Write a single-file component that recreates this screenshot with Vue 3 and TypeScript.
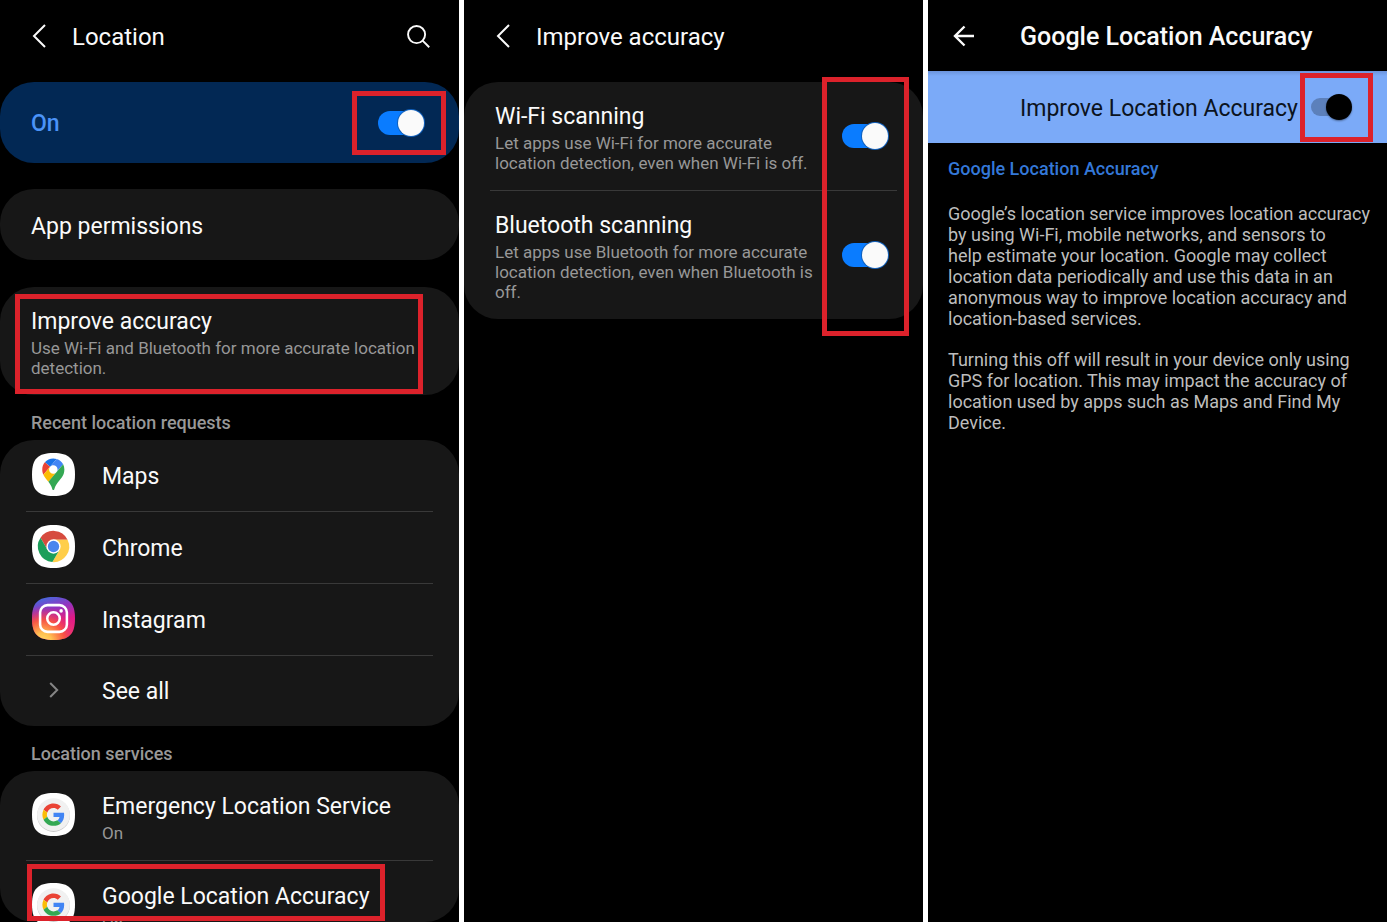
<script setup lang="ts">
import { ref } from 'vue'

interface RecentApp {
  id: 'maps' | 'chrome' | 'instagram'
  name: string
}

interface Scan {
  id: string
  name: string
  detail: string
  on: boolean
}

interface Service {
  name: string
  state: string
}

const locationOn = ref(true)
const accuracyOn = ref(true)

const recentApps: RecentApp[] = [
  { id: 'maps', name: 'Maps' },
  { id: 'chrome', name: 'Chrome' },
  { id: 'instagram', name: 'Instagram' },
]

const services: Service[] = [
  { name: 'Emergency Location Service', state: 'On' },
  { name: 'Google Location Accuracy', state: 'On' },
]

const scans = ref<Scan[]>([
  {
    id: 'wifi',
    name: 'Wi-Fi scanning',
    detail: 'Let apps use Wi-Fi for more accurate location detection, even when Wi-Fi is off.',
    on: true,
  },
  {
    id: 'bluetooth',
    name: 'Bluetooth scanning',
    detail: 'Let apps use Bluetooth for more accurate location detection, even when Bluetooth is off.',
    on: true,
  },
])

const about: string[] = [
  [
    'Google’s location service improves location accuracy',
    'by using Wi-Fi, mobile networks, and sensors to',
    'help estimate your location. Google may collect',
    'location data periodically and use this data in an',
    'anonymous way to improve location accuracy and',
    'location-based services.',
  ].join('\n'),
  [
    'Turning this off will result in your device only using',
    'GPS for location. This may impact the accuracy of',
    'location used by apps such as Maps and Find My',
    'Device.',
  ].join('\n'),
]

const squircle = 'M22 0C38 0 44 6 44 22S38 44 22 44 0 38 0 22 6 0 22 0Z'
</script>

<template>
  <main class="screens">
    <section class="screen">
      <header class="bar">
        <button class="icon-button" type="button" aria-label="Back">
          <svg class="chevron" viewBox="0 0 14 24"><path d="M13 1 2 12l11 11" /></svg>
        </button>
        <h1 class="title">Location</h1>
        <button class="icon-button search" type="button" aria-label="Search">
          <svg class="lens" viewBox="0 0 24 24"><circle cx="10" cy="10" r="8.9" /><path d="m16.3 16.3 6.9 6.9" /></svg>
        </button>
      </header>

      <div class="card master">
        <label class="master-label" for="location-on">On</label>
        <input id="location-on" v-model="locationOn" class="switch" type="checkbox" role="switch" />
        <span class="mark mark-master"></span>
      </div>

      <button class="card permissions" type="button">App permissions</button>

      <button class="card improve" type="button">
        <span class="name">Improve accuracy</span>
        <span class="detail">Use Wi-Fi and Bluetooth for more accurate location detection.</span>
        <span class="mark mark-improve"></span>
      </button>

      <h2 class="group">Recent location requests</h2>
      <ul class="card list">
        <li v-for="app in recentApps" :key="app.id" class="row">
          <button class="app" type="button">
            <svg v-if="app.id === 'maps'" class="app-icon" viewBox="0 0 44 44">
              <path fill="#fff" :d="squircle" />
              <g transform="translate(10.5 5.5) scale(0.245)">
                <path fill="#1a73e8" d="M60.2 2.2C55.8.8 51 0 46.1 0 32 0 19.3 6.4 10.8 16.5l21.8 18.3L60.2 2.2z" />
                <path fill="#ea4335" d="M10.8 16.5C4.1 24.5 0 34.9 0 46.1c0 8.7 1.7 15.7 4.6 22l28-33.3-21.8-18.3z" />
                <path fill="#4285f4" d="M46.2 28.5c9.8 0 17.7 7.9 17.7 17.7 0 4.3-1.6 8.3-4.2 11.4 0 0 13.9-16.6 27.5-32.7-5.6-10.8-15.3-19-27-22.7L32.6 34.8c3.3-3.8 8.1-6.3 13.6-6.3" />
                <path fill="#fbbc04" d="M46.2 63.8c-9.8 0-17.7-7.9-17.7-17.7 0-4.3 1.5-8.3 4.1-11.3l-28 33.3c4.8 10.6 12.8 19.2 21 29.9l34.1-40.5c-3.3 3.9-8.1 6.3-13.5 6.3" />
                <path fill="#34a853" d="M59.1 109.2c15.4-24.1 33.3-35 33.3-63 0-7.7-1.9-14.9-5.2-21.3L25.6 98c2.6 3.4 5.3 7.3 7.9 11.3 9.4 14.5 6.8 23.1 12.8 23.1s3.4-8.7 12.8-23.2" />
              </g>
            </svg>
            <svg v-else-if="app.id === 'chrome'" class="app-icon" viewBox="0 0 44 44">
              <path fill="#fff" :d="squircle" />
              <g transform="translate(22 22)">
                <path fill="#d64b3e" d="M-13.26-8.96A16 16 0 0 1 14.39-7H0L-6.06 3.5Z" />
                <path fill="#ffce4a" d="M14.39-7A16 16 0 0 1-1.13 15.96L6.06 3.5 0-7Z" />
                <path fill="#1b9e5a" d="M-1.13 15.96A16 16 0 0 1-13.26-8.96L-6.06 3.5H6.06Z" />
                <circle r="7.3" fill="#fff" />
                <circle r="5.8" fill="#4a86ee" />
              </g>
            </svg>
            <svg v-else class="app-icon" viewBox="0 0 44 44">
              <defs>
                <linearGradient id="ig-base" x1="0.35" y1="0" x2="0.65" y2="1">
                  <stop offset="0" stop-color="#4a66dc" />
                  <stop offset="0.28" stop-color="#9134c0" />
                  <stop offset="0.6" stop-color="#e01a86" />
                  <stop offset="1" stop-color="#f0307a" />
                </linearGradient>
                <radialGradient id="ig-warm" cx="0.25" cy="1.05" r="0.85">
                  <stop offset="0" stop-color="#ffdc6a" />
                  <stop offset="0.25" stop-color="#ffc050" />
                  <stop offset="0.6" stop-color="#fb5a3c" stop-opacity="0.9" />
                  <stop offset="1" stop-color="#e0257c" stop-opacity="0" />
                </radialGradient>
              </defs>
              <path fill="url(#ig-base)" :d="squircle" />
              <path fill="url(#ig-warm)" :d="squircle" />
              <g fill="none" stroke="#fff" stroke-width="2.6">
                <rect x="8.3" y="8.3" width="27.4" height="27.4" rx="7.6" />
                <circle cx="22" cy="22" r="6.4" />
              </g>
              <circle cx="29.8" cy="14.2" r="1.8" fill="#fff" />
            </svg>
            <span class="name">{{ app.name }}</span>
          </button>
        </li>
        <li class="row">
          <button class="app see-all" type="button">
            <span class="more"><svg viewBox="0 0 10 16"><path d="m1.2 1 7 7-7 7" /></svg></span>
            <span class="name">See all</span>
          </button>
        </li>
      </ul>

      <h2 class="group">Location services</h2>
      <ul class="card list services">
        <li v-for="service in services" :key="service.name" class="row">
          <button class="app service" type="button">
            <svg class="app-icon" viewBox="0 0 44 44">
              <path fill="#fff" :d="squircle" />
              <circle cx="22" cy="23" r="16.8" fill="#c9c9c9" />
              <circle cx="22" cy="22.2" r="16.8" fill="#f1f1f1" />
              <g transform="translate(10.6 10.8) scale(0.475)">
                <path fill="#ea4335" d="M24 9.5c3.54 0 6.71 1.22 9.21 3.6l6.85-6.85C35.9 2.38 30.47 0 24 0 14.62 0 6.51 5.38 2.56 13.22l7.98 6.19C12.43 13.72 17.74 9.5 24 9.5z" />
                <path fill="#4285f4" d="M46.98 24.55c0-1.57-.15-3.09-.38-4.55H24v9.02h12.94c-.58 2.96-2.26 5.48-4.78 7.18l7.73 6c4.51-4.18 7.09-10.36 7.09-17.65z" />
                <path fill="#fbbc05" d="M10.53 28.59c-.48-1.45-.76-2.99-.76-4.59s.27-3.14.76-4.59l-7.98-6.19C.92 16.46 0 20.12 0 24c0 3.88.92 7.54 2.56 10.78l7.97-6.19z" />
                <path fill="#34a853" d="M24 48c6.48 0 11.93-2.13 15.89-5.81l-7.73-6c-2.15 1.45-4.92 2.3-8.16 2.3-6.26 0-11.57-4.22-13.47-9.91l-7.98 6.19C6.51 42.62 14.62 48 24 48z" />
              </g>
            </svg>
            <span class="service-text">
              <span class="name">{{ service.name }}</span>
              <span class="detail">{{ service.state }}</span>
            </span>
          </button>
        </li>
        <li class="mark mark-service" aria-hidden="true"></li>
      </ul>
    </section>

    <section class="screen">
      <header class="bar">
        <button class="icon-button" type="button" aria-label="Back">
          <svg class="chevron" viewBox="0 0 14 24"><path d="M13 1 2 12l11 11" /></svg>
        </button>
        <h1 class="title">Improve accuracy</h1>
      </header>
      <div class="card scans">
        <div v-for="scan in scans" :key="scan.id" class="scan">
          <label class="scan-text" :for="scan.id">
            <span class="name">{{ scan.name }}</span>
            <span class="detail">{{ scan.detail }}</span>
          </label>
          <input :id="scan.id" v-model="scan.on" class="switch" type="checkbox" role="switch" />
        </div>
        <span class="mark mark-scans"></span>
      </div>
    </section>

    <section class="screen">
      <header class="bar google-bar">
        <button class="icon-button" type="button" aria-label="Back">
          <svg class="arrow" viewBox="0 0 22 22"><path d="M21 11H2M11.5 1.5 2 11l9.5 9.5" /></svg>
        </button>
        <h1 class="google-title">Google Location Accuracy</h1>
      </header>
      <div class="banner">
        <label for="accuracy-on">Improve Location Accuracy</label>
        <input id="accuracy-on" v-model="accuracyOn" class="switch dark" type="checkbox" role="switch" />
        <span class="mark mark-banner"></span>
      </div>
      <article class="about">
        <h2>Google Location Accuracy</h2>
        <p v-for="paragraph in about" :key="paragraph">{{ paragraph }}</p>
      </article>
    </section>
  </main>
</template>

<style>
body {
  margin: 0;
  background: #fff;
}
</style>

<style scoped>
.screens {
  display: grid;
  grid-template-columns: repeat(3, 1fr);
  gap: 5px;
  height: 100vh;
  overflow: hidden;
  font-family: Roboto, "Liberation Sans", sans-serif;
  color: #fafafa;
}
.screen {
  display: flex;
  flex-direction: column;
  min-width: 0;
  min-height: 0;
  background: #000;
}
button {
  margin: 0;
  padding: 0;
  border: 0;
  background: none;
  color: inherit;
  font: inherit;
  text-align: left;
  cursor: pointer;
}
h1, h2, p, ul {
  margin: 0;
  padding: 0;
}
ul {
  list-style: none;
}
svg {
  display: block;
  flex: none;
}

.bar {
  display: flex;
  align-items: center;
  box-sizing: border-box;
  height: 82px;
  padding: 0 29px 10px 32px;
}
.icon-button {
  display: flex;
  align-items: center;
  width: 40px;
  height: 40px;
}
.icon-button svg,
.more svg {
  fill: none;
  stroke: #fafafa;
  stroke-width: 2;
}
.chevron {
  width: 14px;
  height: 24px;
}
.lens {
  width: 23px;
  height: 23px;
}
.search {
  justify-content: flex-end;
  margin-left: auto;
}
.title {
  padding-top: 2px;
  font-size: 24px;
  line-height: 32px;
  font-weight: 400;
}

.card {
  position: relative;
  flex: none;
  box-sizing: border-box;
  border-radius: 34px;
  background: #171717;
}
.name {
  display: block;
  font-size: 23px;
  line-height: 28px;
}
.detail {
  display: block;
  margin-top: 2px;
  font-size: 17px;
  line-height: 20px;
  color: #989898;
}
.master {
  display: flex;
  align-items: center;
  justify-content: space-between;
  height: 81px;
  padding: 0 35px 0 31px;
  background: #022854;
}
.master-label {
  padding-top: 2px;
  color: #4b93f8;
  font-size: 23px;
  font-weight: 500;
}
.permissions {
  height: 71px;
  margin-top: 26px;
  padding: 4px 31px 0;
  font-size: 23px;
}
.improve {
  height: 108px;
  margin-top: 27px;
  padding: 3px 42px 0 31px;
}
.group {
  flex: none;
  padding: 17px 31px 6px;
  color: #989898;
  font-size: 18px;
  line-height: 22px;
  font-weight: 500;
}

.list {
  padding: 0 26px;
}
.row + .row {
  border-top: 1px solid #393939;
}
.app {
  display: flex;
  align-items: center;
  gap: 27px;
  width: 100%;
  height: 71px;
  padding: 0 0 2px 6px;
}
.app > .name {
  padding-top: 4px;
}
.see-all {
  height: 70px;
}
.app-icon {
  width: 43px;
  height: 43px;
}
.more {
  display: flex;
  justify-content: center;
  width: 43px;
}
.more svg {
  width: 10px;
  height: 16px;
  stroke: #858585;
}
.services {
  flex: 1 1 0;
  min-height: 0;
  overflow: hidden;
}
.service {
  height: 89px;
}
.service-text {
  padding-top: 6px;
}

.switch {
  position: relative;
  flex: none;
  width: 46px;
  height: 28px;
  margin: 0;
  appearance: none;
  cursor: pointer;
}
.switch::before,
.switch::after {
  content: "";
  position: absolute;
}
.switch::before {
  inset: 2px 1px 2px 0;
  border-radius: 12px;
  background: #555;
}
.switch::after {
  top: 1px;
  left: 0;
  width: 26px;
  height: 26px;
  border-radius: 50%;
  background: #fafafa;
}
.switch:checked::before {
  background: #0a7cff;
}
.switch:checked::after {
  right: 0;
  left: auto;
  box-shadow: 0 0 0 1px #1261bd;
}

.scans {
  padding: 0 26px;
}
.scan {
  display: flex;
  align-items: center;
  justify-content: space-between;
  padding: 17px 9px 17px 5px;
}
.scan + .scan {
  border-top: 1px solid #393939;
}
.scan-text {
  width: 322px;
  padding-top: 4px;
}

.google-bar {
  height: 71px;
  padding: 0 25px;
}
.google-bar .icon-button {
  width: 67px;
}
.arrow {
  width: 22px;
  height: 22px;
}
.google-bar .arrow {
  stroke-width: 2.4;
}
.google-title {
  padding-top: 3px;
  font-size: 25px;
  line-height: 32px;
  font-weight: 500;
}
.banner {
  position: relative;
  display: flex;
  align-items: center;
  justify-content: space-between;
  height: 72px;
  padding: 0 35px 0 92px;
  background: linear-gradient(#6b94dc, #7baaf8 5px);
  color: #0b1320;
  font-size: 23px;
  box-sizing: border-box;
  white-space: nowrap;
}
.banner label {
  padding-top: 2px;
}
.switch.dark {
  width: 41px;
}
.switch.dark::before {
  inset: 5px 2px 5px 0;
  background: #5c80bb;
}
.switch.dark::after {
  background: #000;
  box-shadow: 0 1px 2px #0006;
}
.about {
  padding: 15px 12px 15px 20px;
  color: #bdbdbd;
  font-size: 18px;
  line-height: 21px;
}
.about h2 {
  margin-bottom: 24px;
  color: #3478d8;
  font-size: 18px;
  line-height: 21px;
  font-weight: 500;
}
.about p {
  white-space: pre-line;
}
.about p + p {
  margin-top: 20px;
}

.mark {
  position: absolute;
  box-sizing: border-box;
  border: 5px solid #dc222b;
  pointer-events: none;
}
.mark-master {
  top: 9px;
  right: 13px;
  bottom: 8px;
  width: 94px;
}
.mark-improve {
  inset: 7px 36px 1px 15px;
}
.mark-service {
  top: 93px;
  bottom: 1px;
  left: 27px;
  width: 358px;
}
.mark-scans {
  top: -5px;
  right: 14px;
  bottom: -17px;
  width: 87px;
}
.mark-banner {
  top: 2px;
  right: 14px;
  bottom: 1px;
  width: 73px;
}
</style>
